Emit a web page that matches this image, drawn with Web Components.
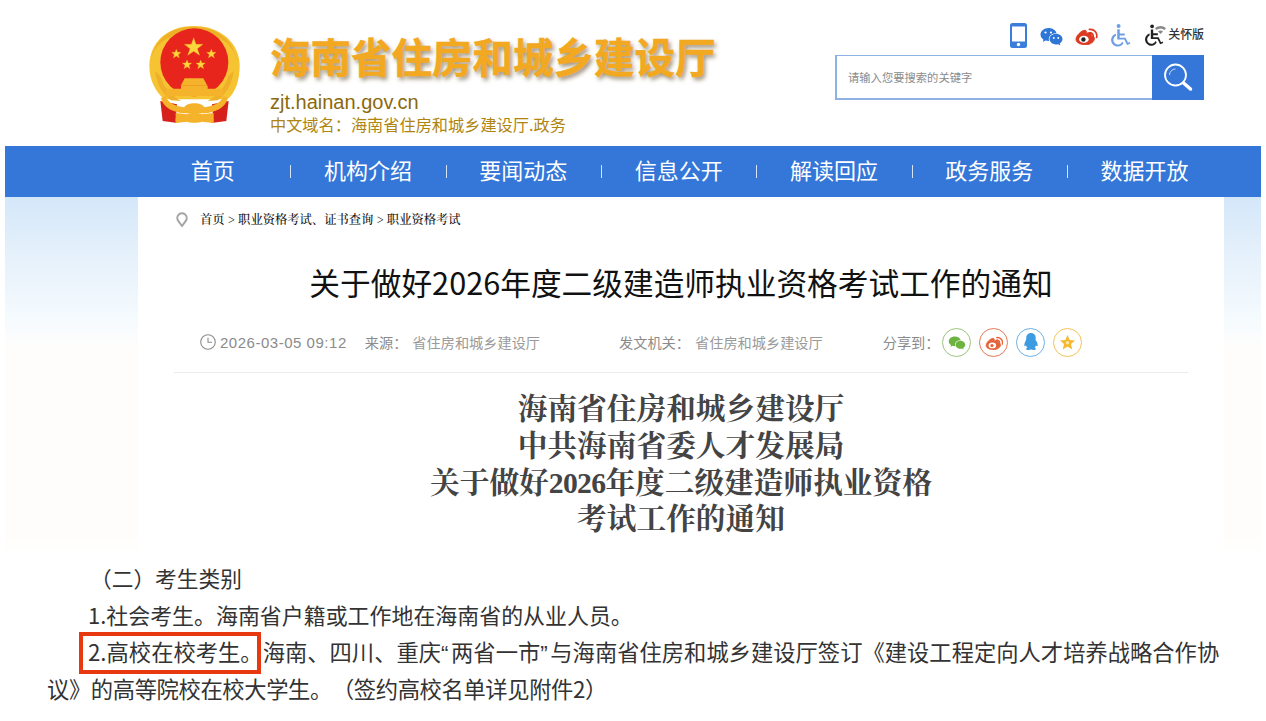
<!doctype html>
<html lang="zh">
<head>
<meta charset="utf-8">
<title>海南省住房和城乡建设厅</title>
<style>
  html, body { margin: 0; background: #fff; }
  body { width: 1266px; height: 721px; overflow: hidden; font-family: "Noto Sans CJK SC", "Liberation Sans", sans-serif; text-spacing-trim: space-all; }
</style>
</head>
<body>
<site-header></site-header>
<main-nav></main-nav>
<article-panel></article-panel>
<notice-excerpt></notice-excerpt>

<script>
const WECHAT = `<path d="M9 3C4.5 3 1 6 1 9.6c0 2.1 1.2 3.9 3 5.1L3.3 17l2.7-1.4c1 .3 2 .4 3 .4h.6c-.2-.6-.3-1.200-.3-1.800C9.300 10.800 12.400 8.200 16.500 8.200h.5C16.200 5.200 13 3 9 3z"/><path d="M23 14.100c0-3-3-5.400-6.500-5.400S10 11.100 10 14.100s3 5.400 6.500 5.400c.8 0 1.500-.1 2.200-.3l2.200 1.200-.6-2c1.600-1 2.700-2.500 2.700-4.300z"/>`;
const WEIBO = `<path d="M10.200 20.500C5.500 20.500 1.500 18.300 1.500 15c0-1.900 1.200-4 3.300-6.100 2.800-2.800 6-4.100 7.200-2.900.5.500.6 1.400.2 2.400-.2.500.5.300.5.300 2.200-.9 4.200-1 4.900 0 .4.500.4 1.300 0 2.100-.2.400.1.500.3.500 1.600.5 3 1.400 3 3 0 2.700-3.900 6.700-10.200 6.700z"/>`;
const WEIBO_WAVES = `<path d="M16 8.200a3 3 0 0 1 3.400 3.800M15.600 4.600a6.700 6.700 0 0 1 7.500 8.500" fill="none" stroke-width="1.800" stroke-linecap="round"/>`;
const WHEELCHAIR = `<circle cx="9" cy="2.600" r="2.100"/><path d="M7.600 6h2.600v4.400h5.200v2.100h-5.200v2.300h6.100l2.600 5.400 1.800-.8.700 1.600-3.500 1.600-2.900-5.800H7.600z"/><path d="M6.200 10.600v2.300a4.800 4.800 0 1 0 6.600 6.100l1.300 1.600a6.900 6.900 0 1 1-7.900-10z"/>`;

class SiteHeader extends HTMLElement {
  constructor() {
    super();
    this.attachShadow({ mode: "open" });
    this.shadowRoot.innerHTML = `
      <style>
        :host { display: flex; height: 146px; padding-left: 148px; box-sizing: border-box; position: relative; }
        .emblem { width: 92px; height: 99px; margin-top: 25px; flex: none; }
        .brand { margin-left: 30px; display: flex; flex-direction: column; }
        h1 { margin: 28px 0 0; font-size: 40.500px; line-height: 56px; font-weight: 700; color: #f2a821; white-space: nowrap;
             -webkit-text-stroke: .5px #f2a821; text-shadow: 2px 3px 4px rgba(80,60,20,.55); }
        .domain { margin-top: 7px; font: 20px/22px "Liberation Sans", sans-serif; color: #8a6a0c; }
        .cn { font-size: 16.200px; line-height: 22px; color: #b0850f; white-space: nowrap; }
        .tools { margin-left: auto; margin-right: 62px; display: flex; flex-direction: column; align-items: flex-end; padding-top: 21px; }
        .icons { display: flex; align-items: center; height: 28px; }
        .icons svg { display: block; }
        .care { display: flex; align-items: center; font-size: 12px; color: #333; font-weight: 500; letter-spacing: -.1px; margin-left: 13px; }
        .care span { margin-top: -4px; }
        .search { margin-top: 6px; width: 369px; height: 45px; box-sizing: border-box; border: 1px solid #8fb2e6; border-width: 1px 0 2px 2px; display: flex; }
        .search span { flex: 1; font-size: 11.300px; color: #8b8b8b; line-height: 43px; padding-left: 11px; }
        .go { width: 52px; background: #3577d8; display: flex; align-items: center; justify-content: center; margin: -1px 0 -2px; }
      </style>
      <svg class="emblem" viewBox="23 12 276 297" aria-hidden="true">
        <path d="M160 15C75 15 27 70 27 135c0 45 20 78 45 100l190 0c24-22 36-58 36-100C298 70 245 15 160 15z" fill="#f6c433"/>
        <path d="M160 17C85 17 38 60 30 125c8-58 58-90 130-90s122 32 130 90C282 60 235 17 160 17z" fill="#eeb026"/>
        <circle cx="162" cy="124" r="102" fill="#e8251d"/>
        <path d="M60 165c10 34 32 58 62 75l-30-2C68 220 50 195 44 150z" fill="#eeb02a"/>
        <path d="M264 165c-10 34-32 58-62 75l30-2c24-18 42-43 48-88z" fill="#eeb02a"/>
        <g fill="#fbd73c" stroke="#f0a51f" stroke-width="1">
          <polygon points="160,50 167,70 188,70 171,83 178,103 160,91 142,103 149,83 132,70 153,70"/>
          <polygon points="108,85 112,94 122,94 114,101 117,111 108,105 99,111 102,101 94,94 104,94"/>
          <polygon points="213,85 217,94 227,94 219,101 222,111 213,105 204,111 207,101 199,94 209,94"/>
          <polygon points="140,117 144,126 154,126 146,133 149,143 140,137 131,143 134,133 126,126 136,126"/>
          <polygon points="181,117 185,126 195,126 187,133 190,143 181,137 172,143 175,133 167,126 177,126"/>
        </g>
        <path d="M60 240l50 10-4 50 6 6-45-6z" fill="#d6201c"/>
        <path d="M265 240l-50 10 4 50-6 6 45-6z" fill="#d6201c"/>
        <path d="M133 172h56l12 22h-80zM76 203h172v22H76z" fill="#f4b32a"/>
        <path d="M122 194h80v10h-80z" fill="#f4b32a"/>
        <path d="M76 225c5 20 30 30 56 34 8-16 52-16 60 0 26-4 52-14 56-34l14 6c-5 30-40 44-70 46h-60c-30-2-64-16-70-46z" fill="#f4b32a"/>
        <path d="M106 276l34 4c8-6 36-6 44 0l36-4v30l-36-4c-8 4-36 4-44 0l-34 4z" fill="#f4b32a"/>
      </svg>
      <div class="brand">
        <h1>海南省住房和城乡建设厅</h1>
        <div class="domain">zjt.hainan.gov.cn</div>
        <div class="cn">中文域名：海南省住房和城乡建设厅.政务</div>
      </div>
      <div class="tools">
        <div class="icons">
          <svg width="17" height="25" viewBox="0 0 17 25"><rect width="17" height="25" rx="2.500" fill="#3b7ddb"/><rect x="2" y="3.500" width="13" height="15" fill="#fff"/><circle cx="8.500" cy="21.500" r="1.700" fill="#fff"/></svg>
          <svg style="margin-left:12px" width="25" height="21" viewBox="0 0 24 21" fill="#2f76d6">${WECHAT}<g fill="#fff"><circle cx="6" cy="7.500" r="1.100"/><circle cx="11.500" cy="7.500" r="1.100"/><circle cx="14.300" cy="13" r=".9"/><circle cx="18.800" cy="13" r=".9"/></g></svg>
          <svg style="margin-left:10px" width="24" height="20" viewBox="0 0 24 21" fill="#dc3a22" stroke="#dc3a22">${WEIBO}${WEIBO_WAVES}<ellipse cx="9.800" cy="15" rx="5" ry="3.800" fill="#fff" stroke="none"/><circle cx="9.300" cy="15.200" r="2.300" fill="#222" stroke="none"/></svg>
          <svg style="margin-left:12px" width="21" height="24" viewBox="0 0 22 24" fill="#6d9fe3">${WHEELCHAIR}</svg>
          <div class="care">
            <svg width="24" height="24" viewBox="0 0 24 24"><g transform="translate(0 1) scale(.9)" fill="#222">${WHEELCHAIR}</g><path d="M11 5a9 9 0 0 1 11 0l-1.500 2a6 6 0 0 0-8 0zM14 8.500a4 4 0 0 1 5 0L16.500 11z" fill="#888"/></svg>
            <span>关怀版</span>
          </div>
        </div>
        <div class="search">
          <span>请输入您要搜索的关键字</span>
          <div class="go">
            <svg width="34" height="34" viewBox="0 0 34 34" fill="none" stroke="#fff"><circle cx="14.500" cy="14" r="10.500" stroke-width="1.800"/><path d="M8.500 14a6 6 0 0 1 6-6" stroke-width="1" opacity=".7"/><path d="M22.500 22l7 6" stroke-width="3.500" stroke-linecap="round"/></svg>
          </div>
        </div>
      </div>`;
  }
}

class MainNav extends HTMLElement {
  static css = `
    :host { display: grid; grid-template-columns: repeat(7, 155.300px); height: 51px; margin: 0 5px; padding-left: 130.100px; background: #3477d8; align-items: start; }
  `;
  constructor() {
    super();
    this.attachShadow({ mode: "open" });
    const items = ["首页", "机构介绍", "要闻动态", "信息公开", "解读回应", "政务服务", "数据开放"];
    this.shadowRoot.innerHTML = `
      <style>${MainNav.css}
        a { color: #fff; font-size: 22px; line-height: 47px; text-align: center; position: relative; }
        a + a::before { content: ""; position: absolute; left: 0; top: 19px; height: 13px; width: 1px; background: #d5e4f8; }
      </style>
      ${items.map(t => `<a>${t}</a>`).join("")}`;
  }
}

class ArticlePanel extends HTMLElement {
  constructor() {
    super();
    this.attachShadow({ mode: "open" });
    this.shadowRoot.innerHTML = `
      <style>
        :host { display: block; height: 358px; margin: 0 5px; box-sizing: border-box; padding: 0 37px 0 133px;
                background: linear-gradient(#d4e7f9 0, #e6f1fb 60px, #f6fbfe 125px, #fefdfc 150px, #fefdfb 340px, #fff 358px); }
        .card { background: #fff; height: 100%; box-sizing: border-box; padding: 0 36px; display: flex; flex-direction: column; }
        .crumb { display: flex; align-items: center; height: 44px; font-family: "Noto Serif CJK SC", "Noto Sans CJK SC", serif; font-size: 12.300px; font-weight: 500; color: #111; padding-left: 2px; }
        .crumb svg { margin-right: 12px; }
        h2 { margin: 19px 0 0; text-align: center; font-size: 30.700px; line-height: 44px; font-weight: 400; color: #111; white-space: nowrap; }
        .meta { display: flex; align-items: center; margin-top: 19px; height: 38px; padding-left: 26px; font-size: 14.200px; color: #8b8b8b; white-space: nowrap; }
        .meta svg { flex: none; }
        .date { margin: 0 18px 0 4px; font-family: "Liberation Sans", sans-serif; font-size: 15px; letter-spacing: .52px; }
        .src { margin-left: 5px; color: #9a9a9a; }
        .org { margin-left: 79px; }
        .share { margin-left: 60px; }
        .circles { display: flex; gap: 8px; margin-left: 3px; }
        .c { width: 29px; height: 29px; border-radius: 50%; border: 1px solid; box-sizing: border-box; display: flex; align-items: center; justify-content: center; }
        hr { border: 0; border-top: 1px solid #ebebeb; margin: 11px 0 0; }
        h3 { margin: 15px 0 0; text-align: center; font-family: "Noto Serif CJK SC", "Noto Sans CJK SC", serif; font-size: 29.700px; line-height: 36.800px; font-weight: 700; color: #444; }
        h3 span { font-family: "Liberation Serif", serif; letter-spacing: -.7px; line-height: 0; }
      </style>
      <div class="card">
        <div class="crumb">
          <svg width="12" height="15" viewBox="0 0 12 15" fill="none" stroke="#a5a5a5" stroke-width="2"><path d="M6 14L2.200 8.800A4.700 4.700 0 1 1 9.800 8.800z"/></svg>
          <span>首页 &gt; 职业资格考试、证书查询 &gt; 职业资格考试</span>
        </div>
        <h2>关于做好2026年度二级建造师执业资格考试工作的通知</h2>
        <div class="meta">
          <svg width="16" height="16" viewBox="0 0 16 16" fill="none" stroke="#8b8b8b" stroke-width="1.100"><circle cx="8" cy="8" r="7.300"/><path d="M8 3.800V8.300H12"/></svg>
          <span class="date">2026-03-05 09:12</span>
          <span>来源：</span><span class="src">省住房和城乡建设厅</span>
          <span class="org">发文机关：</span><span class="src">省住房和城乡建设厅</span>
          <span class="share">分享到：</span>
          <div class="circles">
            <span class="c" style="border-color:#9cc47a"><svg width="18" height="16" viewBox="0 0 24 21" fill="#6db33f">${WECHAT}</svg></span>
            <span class="c" style="border-color:#e27a56"><svg width="18" height="16" viewBox="0 0 24 21" fill="#e5633a" stroke="#e5633a">${WEIBO}${WEIBO_WAVES}<ellipse cx="9.800" cy="15" rx="5" ry="3.800" fill="#fff" stroke="none"/><circle cx="9.300" cy="15.200" r="2.200" fill="#e5633a" stroke="none"/></svg></span>
            <span class="c" style="border-color:#6cb0e4"><svg width="14" height="18" viewBox="0 0 13 17" fill="#3d9be2"><path d="M6.500 0C3.500 0 2 2.300 2 5c0 1-.1 1.600-.7 2.800C.4 9.600 0 11 .3 12.300c.5.300 1 0 1.500-.8.200 1 .7 1.800 1.300 2.400-1 .4-1.400.9-1.200 1.500.3.800 3 .9 4.600.2 1.600.7 4.300.6 4.600-.2.200-.6-.2-1.100-1.200-1.500.6-.6 1.100-1.400 1.300-2.400.5.800 1 1.100 1.500.8.300-1.300-.1-2.700-1-4.500C10.100 6.600 11 6 11 5c0-2.700-1.500-5-4.500-5z"/></svg></span>
            <span class="c" style="border-color:#f3c25a"><svg width="17" height="17" viewBox="0 0 17 17"><polygon points="8.500,1 10.700,6 16,6.500 12,10 13.200,15.500 8.500,12.600 3.800,15.500 5,10 1,6.500 6.300,6" fill="#f5b82e"/><circle cx="8.500" cy="8.800" r="1.700" fill="#fbe7a8"/></svg></span>
          </div>
        </div>
        <hr>
        <h3>海南省住房和城乡建设厅<br>中共海南省委人才发展局<br>关于做好<span>2026</span>年度二级建造师执业资格<br>考试工作的通知</h3>
      </div>`;
  }
}

class NoticeExcerpt extends HTMLElement {
  constructor() {
    super();
    this.attachShadow({ mode: "open" });
    this.shadowRoot.innerHTML = `
      <style>
        :host { display: block; padding: 4px 40px 0 47px; font-size: 22.300px; line-height: 37px; color: #333; position: relative; white-space: nowrap; }
        p { margin: 0; height: 37px; }
        q { quotes: none; font-family: "Liberation Sans", sans-serif; letter-spacing: 2.600px; line-height: 0; }
        .mark { position: absolute; left: 79px; top: 77px; width: 182px; height: 42px; box-sizing: border-box; border: 4px solid #e8380f; }
      </style>
      <p style="padding-left:43px;font-size:21.700px">（二）考生类别</p>
      <p style="padding-left:41px;font-size:21.950px">1.社会考生。海南省户籍或工作地在海南省的从业人员。</p>
      <p style="padding-left:41px">2.高校在校考生。海南、四川、重庆<q>“</q>两省一市<q>”</q>与海南省住房和城乡建设厅签订《建设工程定向人才培养战略合作协</p>
      <p style="letter-spacing:-.38px">议》的高等院校在校大学生。（签约高校名单详见附件2）</p>
      <div class="mark"></div>`;
  }
}

customElements.define("site-header", SiteHeader);
customElements.define("main-nav", MainNav);
customElements.define("article-panel", ArticlePanel);
customElements.define("notice-excerpt", NoticeExcerpt);
</script>
</body>
</html>
